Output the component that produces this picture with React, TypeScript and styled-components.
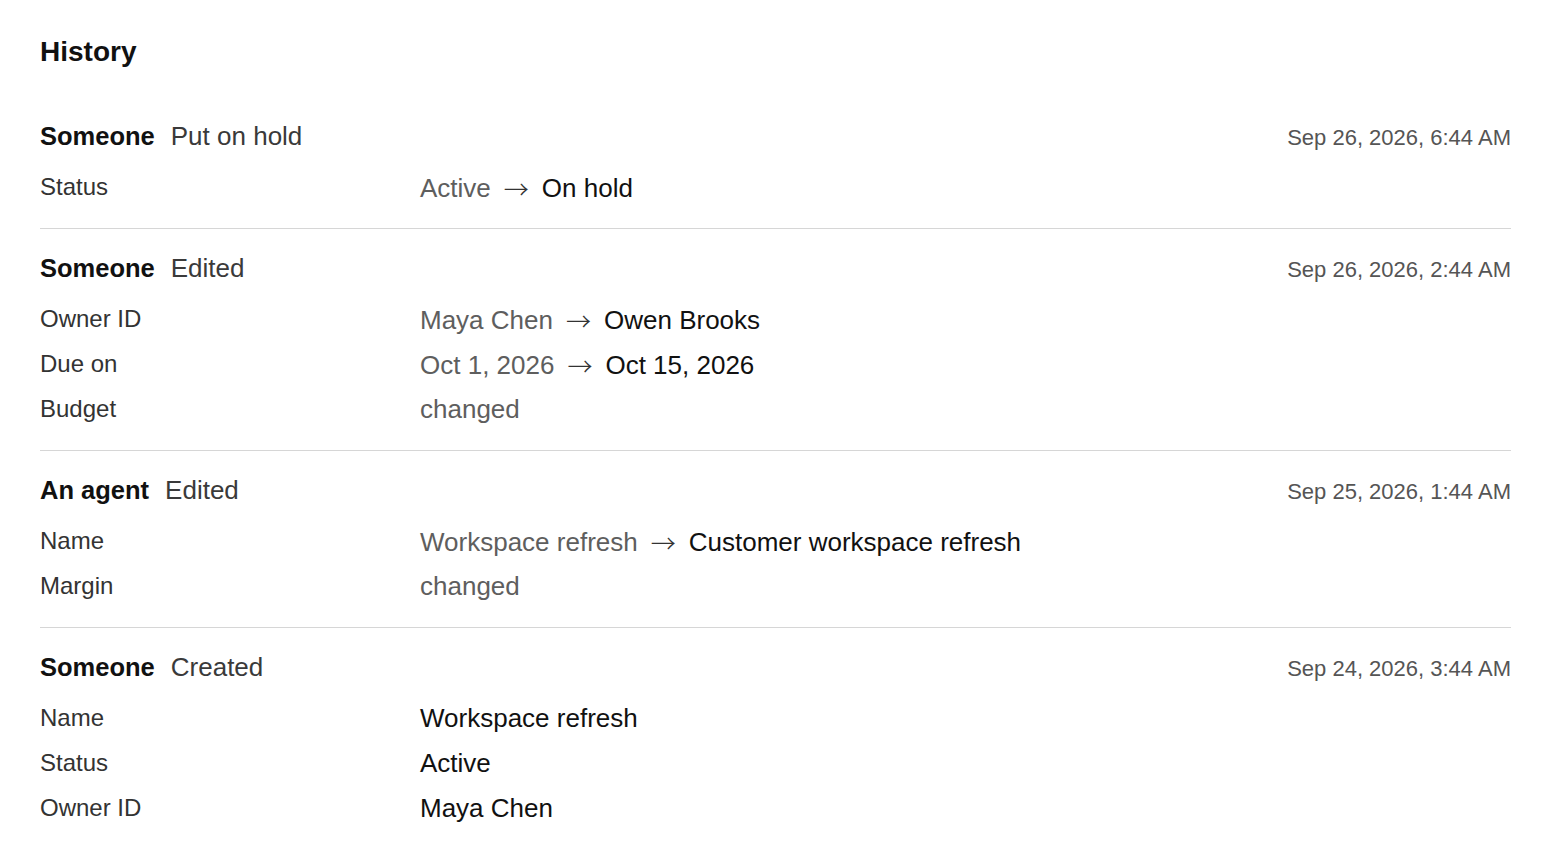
import React from "react";
import styled, { createGlobalStyle } from "styled-components";

type Change = {
  field: string;
  from?: string;
  to?: string;
  note?: string;
};

type Entry = {
  actor: string;
  action: string;
  at: string;
  changes: Change[];
};

const entries: Entry[] = [
  {
    actor: "Someone",
    action: "Put on hold",
    at: "Sep 26, 2026, 6:44 AM",
    changes: [{ field: "Status", from: "Active", to: "On hold" }],
  },
  {
    actor: "Someone",
    action: "Edited",
    at: "Sep 26, 2026, 2:44 AM",
    changes: [
      { field: "Owner ID", from: "Maya Chen", to: "Owen Brooks" },
      { field: "Due on", from: "Oct 1, 2026", to: "Oct 15, 2026" },
      { field: "Budget", note: "changed" },
    ],
  },
  {
    actor: "An agent",
    action: "Edited",
    at: "Sep 25, 2026, 1:44 AM",
    changes: [
      { field: "Name", from: "Workspace refresh", to: "Customer workspace refresh" },
      { field: "Margin", note: "changed" },
    ],
  },
  {
    actor: "Someone",
    action: "Created",
    at: "Sep 24, 2026, 3:44 AM",
    changes: [
      { field: "Name", to: "Workspace refresh" },
      { field: "Status", to: "Active" },
      { field: "Owner ID", to: "Maya Chen" },
    ],
  },
];

const GlobalStyle = createGlobalStyle`
  body {
    margin: 0;
    background: #ffffff;
    font-family: "Liberation Sans", Arial, Helvetica, sans-serif;
    color: #111111;
  }
`;

const Page = styled.main`
  padding: 35px 40px 20px;
`;

const Title = styled.h2`
  margin: 0 0 28px;
  font-size: 28px;
  line-height: 34px;
  font-weight: 700;
  color: #111111;
`;

const List = styled.ul`
  list-style: none;
  margin: 0;
  padding: 0;
`;

const Item = styled.li<{ $last?: boolean }>`
  padding: 23px 0 19px;
  border-bottom: ${(p) => (p.$last ? "none" : "1px solid #d6d6d6")};
`;

const Header = styled.div`
  display: flex;
  align-items: baseline;
  height: 32px;
  line-height: 32px;
  margin-bottom: 12px;
`;

const Actor = styled.span`
  font-size: 25.5px;
  font-weight: 700;
  color: #111111;
`;

const Action = styled.span`
  margin-left: 16px;
  font-size: 26px;
  color: #3a3a3a;
`;

const Time = styled.time`
  margin-left: auto;
  font-size: 22px;
  color: #555555;
`;

const Row = styled.div`
  display: grid;
  grid-template-columns: 380px 1fr;
  align-items: center;
  height: 45px;
`;

const Field = styled.span`
  font-size: 24px;
  color: #333333;
`;

const Value = styled.span`
  display: flex;
  align-items: baseline;
  gap: 13px;
  font-size: 26px;
  line-height: 32px;
  padding-top: 1px;
`;

const Old = styled.span`
  color: #5e5e5e;
`;

// the wide CJK arrow glyph is a thin full-em stroke
const Arrow = styled.span`
  font-family: "Noto Sans CJK JP", "DejaVu Sans", sans-serif;
  font-size: 25px;
  font-weight: 300;
  color: #333333;
  transform: translateY(2px);
`;

const New = styled.span`
  color: #111111;
`;

const ChangeRow: React.FC<{ change: Change }> = ({ change }) => (
  <Row>
    <Field>{change.field}</Field>
    <Value>
      {change.note ? (
        <Old>{change.note}</Old>
      ) : (
        <>
          {change.from && (
            <>
              <Old>{change.from}</Old>
              <Arrow>→</Arrow>
            </>
          )}
          <New>{change.to}</New>
        </>
      )}
    </Value>
  </Row>
);

const App: React.FC = () => {
  return (
    <>
      <GlobalStyle />
      <Page>
        <Title>History</Title>
        <List>
          {entries.map((entry, i) => (
            <Item key={i} $last={i === entries.length - 1}>
              <Header>
                <Actor>{entry.actor}</Actor>
                <Action>{entry.action}</Action>
                <Time>{entry.at}</Time>
              </Header>
              {entry.changes.map((change, j) => (
                <ChangeRow key={j} change={change} />
              ))}
            </Item>
          ))}
        </List>
      </Page>
    </>
  );
};

export default App;
